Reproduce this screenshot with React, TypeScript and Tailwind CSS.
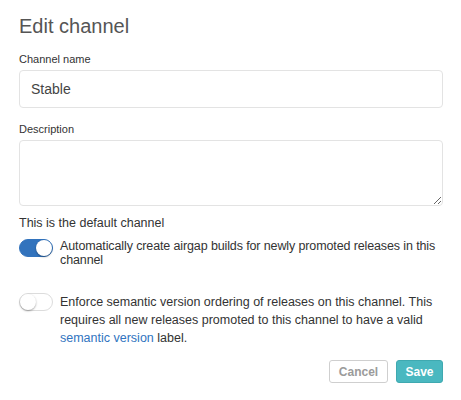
import { useState } from "react";

interface ToggleProps {
  on: boolean;
  onChange: (value: boolean) => void;
}

function Toggle({ on, onChange }: ToggleProps) {
  return (
    <button
      type="button"
      onClick={() => onChange(!on)}
      className={`relative shrink-0 w-[34px] h-[18px] rounded-full border ${
        on ? "bg-[#3273bd] border-[#3273bd]" : "bg-white border-[#dcdcdc]"
      }`}
    >
      <span
        className={`absolute top-[0px] w-[16px] h-[16px] rounded-full bg-white shadow-[0_1px_2px_rgba(0,0,0,0.35)] ${
          on ? "left-[16px]" : "left-[0px]"
        }`}
      />
    </button>
  );
}

export default function App() {
  const [name, setName] = useState("Stable");
  const [description, setDescription] = useState("");
  const [airgap, setAirgap] = useState(true);
  const [semver, setSemver] = useState(false);

  return (
    <div className="w-[461px] h-[400px] bg-white pl-[19px] pr-[18px] pt-[14px] font-['Liberation_Sans',Arial,sans-serif] text-[#4a4a4a]">
      <h1 className="text-[20px] leading-[24px] font-normal text-[#555]">
        Edit channel
      </h1>

      <label className="block mt-[14px] text-[11px] leading-[14px] text-[#333]">
        Channel name
      </label>
      <input
        value={name}
        onChange={e => setName(e.target.value)}
        className="block mt-[4px] w-full h-[38px] px-[11px] text-[14px] text-[#444] border border-[#e3e3e3] rounded-[4px] outline-none"
      />

      <label className="block mt-[14px] text-[11px] leading-[14px] text-[#333]">
        Description
      </label>
      <textarea
        value={description}
        onChange={e => setDescription(e.target.value)}
        className="block mt-[4px] w-full h-[66px] px-[11px] py-[8px] text-[14px] border border-[#e3e3e3] rounded-[4px] outline-none"
      />

      <p className="mt-[9px] text-[12.5px] leading-[16px] text-[#333]">
        This is the default channel
      </p>

      <div className="flex items-start gap-[7px] mt-[8px]">
        <Toggle on={airgap} onChange={setAirgap} />
        <span className="text-[12.5px] leading-[14px] tracking-[-0.12px] text-[#333]">
          Automatically create airgap builds for newly promoted releases in this
          channel
        </span>
      </div>

      <div className="flex items-start gap-[7px] mt-[26px]">
        <Toggle on={semver} onChange={setSemver} />
        <span className="text-[12.5px] leading-[18px] text-[#333]">
          Enforce semantic version ordering of releases on this channel. This
          requires all new releases promoted to this channel to have a valid{" "}
          <a href="#" className="text-[#3174c0]">
            semantic version
          </a>{" "}
          label.
        </span>
      </div>

      <div className="flex justify-end gap-[8px] mt-[13px]">
        <button
          type="button"
          className="w-[59px] h-[23px] rounded-[3px] border border-[#cfcfcf] bg-white text-[12px] font-bold text-[#9b9b9b]"
        >
          Cancel
        </button>
        <button
          type="button"
          className="w-[47px] h-[23px] rounded-[3px] border border-[#3fa9b0] bg-[#4ab8c0] text-[12px] font-bold text-white"
        >
          Save
        </button>
      </div>
    </div>
  );
}
